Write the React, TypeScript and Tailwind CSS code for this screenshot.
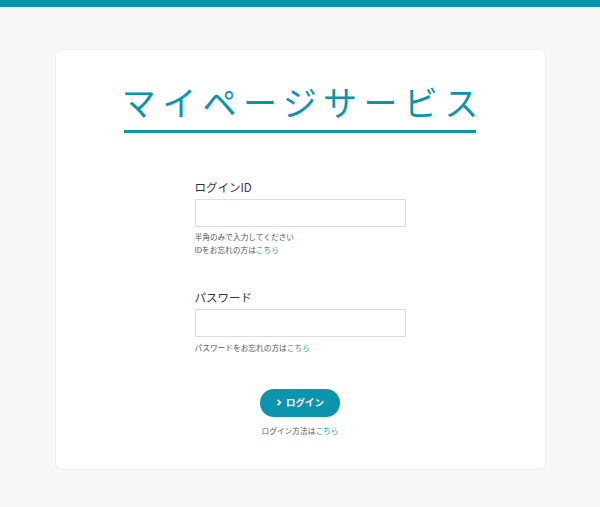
const jp = { fontFamily: '"Noto Sans CJK JP", "Noto Sans", sans-serif' };

function Helper({ text, link }: { text: string; link?: boolean }) {
  return (
    <p className="text-[7.7px] leading-[12.5px] text-[#555]">
      {text}
      {link && <a className="text-[#1d9bb6]">こちら</a>}
    </p>
  );
}

export default function App() {
  return (
    <div className="min-h-[507px] bg-[#f8f8f8]" style={jp}>
      <div className="h-[7px] bg-[#0094b0]" />
      <div className="pt-[42px]">
        <div className="mx-auto w-[491px] h-[421px] bg-white border border-[#eeeeee] rounded-[7px] pt-[35px]">
          <div className="flex justify-center">
            <h1 className="inline-block whitespace-nowrap text-[34px] leading-[34px] tracking-[6.4px] text-[#0a94ad] font-normal border-b-[3px] border-[#0a94ad] pb-[11px]">
              <span className="inline-block -ml-[2px] -mr-[8.4px]">マイページサービス</span>
            </h1>
          </div>

          <div className="w-[211px] mx-auto mt-[47px]">
            <label className="block text-[11.5px] leading-[14px] text-[#333]">ログインID</label>
            <input className="block mt-[5px] w-full h-[28px] border border-[#dddddd] bg-white outline-none" />
            <div className="mt-[4px]">
              <Helper text="半角のみで入力してください" />
              <Helper text="IDをお忘れの方は" link />
            </div>

            <label className="block mt-[34px] text-[11.5px] leading-[14px] text-[#333]">パスワード</label>
            <input type="password" className="block mt-[5px] w-full h-[28px] border border-[#dddddd] bg-white outline-none" />
            <div className="mt-[5px]">
              <Helper text="パスワードをお忘れの方は" link />
            </div>
          </div>

          <div className="flex flex-col items-center mt-[34px]">
            <button className="flex items-center justify-center gap-[4px] w-[80px] h-[28px] rounded-full bg-[#0b94ad] text-white text-[9.5px] font-bold">
              <svg width="6" height="7" viewBox="0 0 6 8" fill="none">
                <path d="M1.5 1L4.5 4L1.5 7" stroke="white" strokeWidth="2" />
              </svg>
              ログイン
            </button>
            <div className="mt-[8px]">
              <Helper text="ログイン方法は" link />
            </div>
          </div>
        </div>
      </div>
    </div>
  );
}
